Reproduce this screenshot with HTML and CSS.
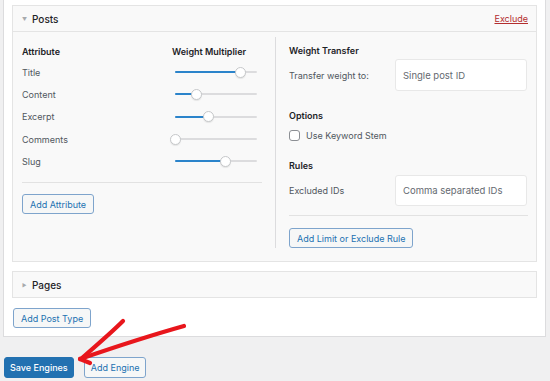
FILE: index.html
```html
<!DOCTYPE html>
<html>
<head>
<meta charset="utf-8">
<link rel="stylesheet" href="styles.css">
</head>
<body>
<div class="panel">
  <div class="card">
    <div class="card-head">
      <span class="toggle">&#9660;</span>
      <span class="card-title">Posts</span>
      <a class="exclude" href="#">Exclude</a>
    </div>
    <div class="card-body">
      <div class="col-left">
        <div class="attr-head">
          <span class="attr-name">Attribute</span>
          <span class="attr-weight">Weight Multiplier</span>
        </div>
        <div class="attr-row"><span class="attr-label">Title</span><div class="slider"><div class="fill" style="width:80%"></div><div class="thumb" style="left:80%"></div></div></div>
        <div class="attr-row"><span class="attr-label">Content</span><div class="slider"><div class="fill" style="width:26%"></div><div class="thumb" style="left:26%"></div></div></div>
        <div class="attr-row"><span class="attr-label">Excerpt</span><div class="slider"><div class="fill" style="width:41%"></div><div class="thumb" style="left:41%"></div></div></div>
        <div class="attr-row"><span class="attr-label">Comments</span><div class="slider"><div class="fill" style="width:0%"></div><div class="thumb" style="left:0%"></div></div></div>
        <div class="attr-row"><span class="attr-label">Slug</span><div class="slider"><div class="fill" style="width:61%"></div><div class="thumb" style="left:61%"></div></div></div>
        <div class="sep sep-left"></div>
        <button class="btn btn-attr">Add Attribute</button>
      </div>
      <div class="col-right">
        <div class="heading">Weight Transfer</div>
        <div class="field field-transfer">
          <span class="field-label">Transfer weight to:</span>
          <div class="input">Single post ID</div>
        </div>
        <div class="heading heading-options">Options</div>
        <label class="check-row"><span class="checkbox"></span><span>Use Keyword Stem</span></label>
        <div class="heading heading-rules">Rules</div>
        <div class="field field-rules">
          <span class="field-label">Excluded IDs</span>
          <div class="input input-rules">Comma separated IDs</div>
        </div>
        <div class="sep sep-right"></div>
        <button class="btn btn-rule">Add Limit or Exclude Rule</button>
      </div>
    </div>
  </div>
  <div class="card card-pages">
    <div class="card-head card-head-closed">
      <span class="toggle toggle-closed">&#9654;</span>
      <span class="card-title">Pages</span>
    </div>
  </div>
  <button class="btn btn-posttype">Add Post Type</button>
</div>
<div class="actions">
  <button class="btn-primary">Save Engines</button>
  <button class="btn btn-engine">Add Engine</button>
</div>
<svg class="arrow" width="550" height="381" viewBox="0 0 550 381">
  <g fill="none" stroke="#e8161c" stroke-width="4.2" stroke-linecap="round" stroke-linejoin="round">
    <path d="M123 321 C 113 331, 97 345, 82 358"/>
    <path d="M184 326 C 152 335, 112 348, 80 359"/>
    <path d="M80 359 L 90 363"/>
  </g>
</svg>
</body>
</html>
```
FILE: styles.css
```css
* { box-sizing: border-box; }
html, body { margin: 0; padding: 0; }
body {
  background: #f0f0f1;
  font-family: Inter, "Liberation Sans", sans-serif;
  font-size: 9px;
  color: #50575e;
  width: 550px;
  height: 381px;
  overflow: hidden;
  position: relative;
}
.panel {
  margin: 0 4px 0 3px;
  background: #fff;
  border: 1px solid #dcdcde;
  border-top: none;
  padding: 5px 8px 8px 8px;
}
.card {
  background: #f9f9f9;
  border: 1px solid #e4e4e4;
}
.card-head {
  height: 26px;
  display: flex;
  align-items: center;
  padding: 0 8px 0 9px;
  border-bottom: 1px solid #e4e4e4;
}
.card-head-closed { border-bottom: none; height: 25px; }
.toggle {
  font-size: 5px;
  color: #a7aaad;
  width: 10px;
}
.card-title {
  font-size: 10px;
  font-weight: 500;
  color: #1d2327;
}
.exclude {
  margin-left: auto;
  color: #b32d2e;
  text-decoration: underline;
  font-size: 9px;
}
.card-body {
  display: flex;
  padding: 5px 8px 13px 9px;
}
.col-left {
  width: 254px;
  padding: 7px 13px 0 0;
  border-right: 1px solid #dcdcde;
  display: flex;
  flex-direction: column;
  align-items: flex-start;
}
.attr-head {
  display: flex;
  height: 14px;
  align-items: center;
  width: 100%;
  font-weight: 600;
  color: #1d2327;
  margin-bottom: 3px;
}
.attr-name { width: 150px; }
.attr-row {
  display: flex;
  align-items: center;
  height: 22.3px;
  width: 100%;
}
.attr-label { width: 153px; }
.slider {
  position: relative;
  width: 82px;
  height: 2px;
  background: #dcdcde;
  border-radius: 1px;
}
.fill {
  height: 2px;
  background: #2b84cb;
  border-radius: 1px;
}
.thumb {
  position: absolute;
  top: 50%;
  width: 11px;
  height: 11px;
  margin: -5.5px 0 0 -5.5px;
  border-radius: 50%;
  background: #fff;
  border: 1px solid #c6c8ca;
  box-shadow: 0 1px 1px rgba(0,0,0,0.08);
}
.sep {
  height: 1px;
  background: #e2e2e2;
}
.sep-left { width: 100%; margin-top: 10px; }
.btn {
  font-family: inherit;
  font-size: 9px;
  color: #2271b1;
  background: #f6f7f7;
  border: 1px solid #7ea4cc;
  border-radius: 3px;
  height: 20px;
  padding: 0 7px;
  white-space: nowrap;
  cursor: pointer;
}
.btn-attr { margin-top: 11px; }
.col-right {
  flex: 1;
  padding: 7px 0 0 13px;
  display: flex;
  flex-direction: column;
  align-items: flex-start;
}
.heading {
  height: 14px;
  line-height: 14px;
  font-weight: 600;
  color: #1d2327;
}
.field {
  display: flex;
  align-items: center;
  width: 100%;
  margin-top: 1px;
}
.field-label { width: 106px; }
.input {
  width: 132px;
  height: 32px;
  background: #fff;
  border: 1px solid #e8e8e8;
  border-radius: 3px;
  display: flex;
  align-items: center;
  padding-left: 7px;
  font-size: 9.5px;
  color: #646970;
}
.input-rules { height: 31px; }
.field-rules { margin-top: 2px; }
.heading-options { margin-top: 18px; }
.check-row {
  display: flex;
  align-items: center;
  height: 14px;
  margin-top: 5px;
}
.checkbox {
  width: 11px;
  height: 11px;
  border: 1px solid #8c8f94;
  border-radius: 3px;
  background: #fff;
  margin-right: 6px;
}
.heading-rules { margin-top: 17px; }
.sep-right { width: 100%; margin-top: 9px; }
.btn-rule { margin-top: 12px; }
.card-pages { margin-top: 9px; }
.toggle-closed { font-size: 5px; }
.btn-posttype { margin-top: 10px; margin-left: 1px; }
.actions {
  display: flex;
  gap: 10px;
  margin: 20px 0 0 4px;
}
.btn-primary {
  font-family: inherit;
  font-size: 9px;
  height: 21px;
  padding: 0 5px;
  background: #2271b1;
  color: #fff;
  border: 1px solid #2271b1;
  border-radius: 3px;
  font-weight: 500;
  white-space: nowrap;
}
.btn-engine { height: 21px; padding: 0 6px; }
.arrow {
  position: absolute;
  left: 0;
  top: 0;
  pointer-events: none;
}
```
